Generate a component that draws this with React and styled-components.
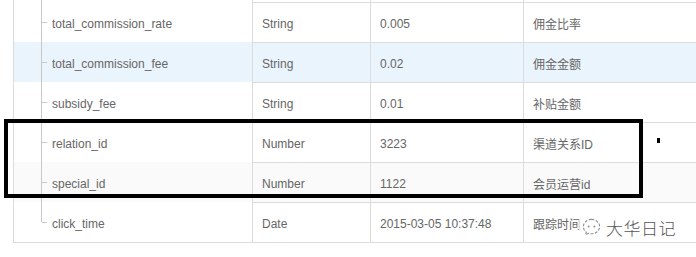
import styled, { createGlobalStyle } from "styled-components";

const GlobalStyle = createGlobalStyle`
  html, body {
    margin: 0;
    padding: 0;
    background: #fff;
  }
  body {
    font-family: "Liberation Sans", "Noto Sans CJK SC", sans-serif;
    font-size: 12px;
    color: #666;
  }
`;

const rows = [
  { name: "total_commission_rate", type: "String", value: "0.005", desc: "佣金比率" },
  { name: "total_commission_fee", type: "String", value: "0.02", desc: "佣金金额", hl: "active" },
  { name: "subsidy_fee", type: "String", value: "0.01", desc: "补贴金额" },
  { name: "relation_id", type: "Number", value: "3223", desc: "渠道关系ID" },
  { name: "special_id", type: "Number", value: "1122", desc: "会员运营id", hl: "soft" },
  { name: "click_time", type: "Date", value: "2015-03-05 10:37:48", desc: "跟踪时间" },
];

function App() {
  return (
    <Page>
      <GlobalStyle />
      <Table>
        <Row $h={2}>
          <NameCell />
          <Cell $noTop />
          <Cell $noTop />
          <Cell $noTop />
        </Row>
        {rows.map((r, i) => (
          <Row key={r.name} $h={40} $hl={r.hl}>
            <NameCell $last={i === rows.length - 1}>
              <Tick />
              {r.name}
            </NameCell>
            <Cell>{r.type}</Cell>
            <Cell>{r.value}</Cell>
            <Cell>{r.desc}</Cell>
          </Row>
        ))}
      </Table>
      {/* 标注框 */}
      <Mark />
      <Dot />
      <Watermark>
        <svg width="21" height="21" viewBox="0 0 22 22" fill="none">
          <path
            d="M11 2.5c-4.7 0-8.5 3.4-8.5 7.6 0 2.4 1.2 4.5 3.1 5.9l-.7 2.6 2.9-1.5c1 .3 2.1.5 3.2.5 4.7 0 8.5-3.4 8.5-7.5S15.7 2.5 11 2.5z"
            stroke="#8a8a8a"
            strokeWidth="1.1"
            strokeDasharray="3 1.6"
          />
          <circle cx="8" cy="10" r="1" fill="#8a8a8a" />
          <circle cx="14" cy="10" r="1" fill="#8a8a8a" />
        </svg>
        <span>大华日记</span>
      </Watermark>
    </Page>
  );
}
export default App;

const Page = styled.div`
  position: relative;
  width: 696px;
  height: 257px;
  overflow: hidden;
  padding-left: 13px;
  box-sizing: border-box;
`;

const Table = styled.div`
  width: 700px;
  border-left: 1px solid #dcdcdc;
  border-bottom: 1px solid #dcdcdc;
`;

const Row = styled.div`
  display: grid;
  grid-template-columns: 238px 118px 153px 1fr;
  height: ${(p) => p.$h}px;
  background: ${(p) =>
    p.$hl === "active" ? "#eaf4fd" : p.$hl === "soft" ? "#fafafa" : "#fff"};
`;

const Cell = styled.div`
  display: flex;
  align-items: center;
  padding: 2px 0 0 9px;
  border-left: 1px solid #dcdcdc;
  border-top: ${(p) => (p.$noTop ? "none" : "1px solid #dcdcdc")};
  white-space: nowrap;
`;

/* 树形字段名 */
const NameCell = styled.div`
  position: relative;
  display: flex;
  align-items: center;
  padding: 3px 0 0 38px;
  white-space: nowrap;
  &::before {
    content: "";
    position: absolute;
    left: 27px;
    top: 0;
    width: 1px;
    height: ${(p) => (p.$last ? "50%" : "100%")};
    background: #c8c8c8;
  }
`;

const Tick = styled.span`
  position: absolute;
  left: 28px;
  top: 50%;
  width: 5px;
  height: 1px;
  background: #c8c8c8;
`;

const Mark = styled.div`
  position: absolute;
  left: 4px;
  top: 119px;
  width: 639px;
  height: 79px;
  border: 4px solid #000;
  box-sizing: border-box;
`;

const Dot = styled.div`
  position: absolute;
  left: 657px;
  top: 138px;
  width: 3px;
  height: 5px;
  background: #000;
`;

const Watermark = styled.div`
  position: absolute;
  left: 579px;
  top: 214px;
  display: flex;
  align-items: center;
  gap: 4px;
  padding: 1px 4px 1px 2px;
  background: rgba(255, 255, 255, 0.7);
  span {
    font-family: "Noto Sans CJK SC", sans-serif;
    font-size: 17px;
    font-weight: 300;
    color: #555;
    letter-spacing: 0.5px;
  }
`;
